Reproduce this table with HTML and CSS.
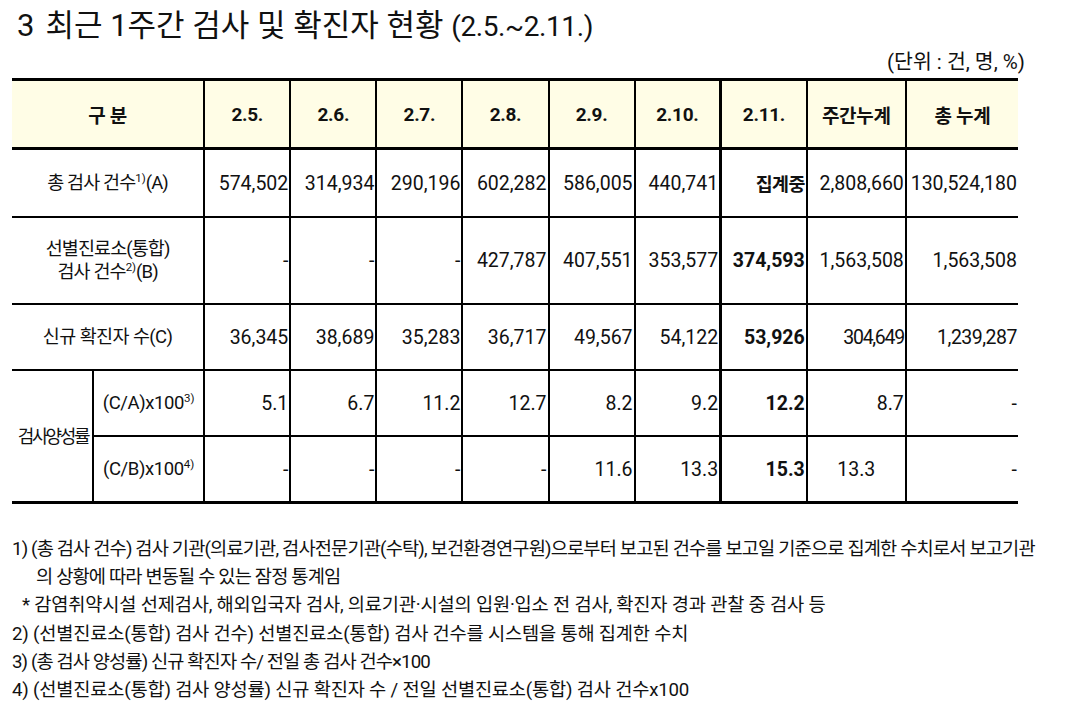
FILE: index.html
```html
<!DOCTYPE html>
<html lang="ko">
<head>
<meta charset="utf-8">
<title>최근 1주간 검사 및 확진자 현황</title>
<link rel="stylesheet" href="styles.css">
</head>
<body>
<div class="page">
  <h1 class="title"><span class="num">3</span><span class="ko">최근 1주간 검사 및 확진자 현황</span> <span class="range">(2.5.~2.11.)</span></h1>
  <div class="unit">(단위 : 건, 명, %)</div>
  <table class="stats">
    <colgroup>
      <col class="c1a"><col class="c1b">
      <col class="cd"><col class="cd"><col class="cd"><col class="cd"><col class="cd"><col class="cd"><col class="cd">
      <col class="cw"><col class="ct">
    </colgroup>
    <thead>
      <tr class="r-head">
        <th colspan="2">구 분</th>
        <th>2.5.</th><th>2.6.</th><th>2.7.</th><th>2.8.</th><th>2.9.</th><th>2.10.</th>
        <th class="today">2.11.</th>
        <th>주간누계</th><th>총 누계</th>
      </tr>
    </thead>
    <tbody>
      <tr class="r1">
        <td colspan="2" class="label">총 검사 건수<sup>1)</sup>(A)</td>
        <td class="n">574,502</td>
        <td class="n">314,934</td>
        <td class="n">290,196</td>
        <td class="n">602,282</td>
        <td class="n">586,005</td>
        <td class="n">440,741</td>
        <td class="n today b ko-n">집계중</td>
        <td class="n">2,808,660</td>
        <td class="n">130,524,180</td>
      </tr>
      <tr class="r2">
        <td colspan="2" class="label">선별진료소(통합)<br>검사 건수<sup>2)</sup>(B)</td>
        <td class="n">-</td><td class="n">-</td><td class="n">-</td>
        <td class="n">427,787</td>
        <td class="n">407,551</td>
        <td class="n">353,577</td>
        <td class="n today b">374,593</td>
        <td class="n">1,563,508</td>
        <td class="n">1,563,508</td>
      </tr>
      <tr class="r3">
        <td colspan="2" class="label">신규 확진자 수(C)</td>
        <td class="n">36,345</td>
        <td class="n">38,689</td>
        <td class="n">35,283</td>
        <td class="n">36,717</td>
        <td class="n">49,567</td>
        <td class="n">54,122</td>
        <td class="n today b">53,926</td>
        <td class="n tight">304,649</td>
        <td class="n snug">1,239,287</td>
      </tr>
      <tr class="r4">
        <td rowspan="2" class="label group">검사 양성률</td>
        <td class="label sub">(C/A)x100<sup>3)</sup></td>
        <td class="n">5.1</td><td class="n">6.7</td><td class="n">11.2</td><td class="n">12.7</td><td class="n">8.2</td><td class="n">9.2</td>
        <td class="n today b">12.2</td>
        <td class="n">8.7</td><td class="n">-</td>
      </tr>
      <tr class="r5">
        <td class="label sub">(C/B)x100<sup>4)</sup></td>
        <td class="n">-</td><td class="n">-</td><td class="n">-</td><td class="n">-</td><td class="n">11.6</td><td class="n">13.3</td>
        <td class="n today b">15.3</td>
        <td class="c">13.3</td><td class="n">-</td>
      </tr>
    </tbody>
  </table>
  <div class="notes">
    <p class="note hang">1) (총 검사 건수) 검사 기관(의료기관, 검사전문기관(수탁), 보건환경연구원)으로부터 보고된 건수를 보고일 기준으로 집계한 수치로서 보고기관<br>의 상황에 따라 변동될 수 있는 잠정 통계임</p>
    <p class="note star">* 감염취약시설 선제검사, 해외입국자 검사, 의료기관·시설의 입원·입소 전 검사, 확진자 경과 관찰 중 검사 등</p>
    <p class="note">2) (선별진료소(통합) 검사 건수) 선별진료소(통합) 검사 건수를 시스템을 통해 집계한 수치</p>
    <p class="note narrow">3) (총 검사 양성률) 신규 확진자 수/ 전일 총 검사 건수×100</p>
    <p class="note">4) (선별진료소(통합) 검사 양성률) 신규 확진자 수 / 전일 선별진료소(통합) 검사 건수x100</p>
  </div>
</div>
</body>
</html>
```

FILE: styles.css
```css
html, body {
  margin: 0;
  padding: 0;
  background: #ffffff;
}

body {
  font-family: Roboto, "Noto Sans CJK KR", "Noto Sans", sans-serif;
  color: #111111;
}

.page {
  width: 1080px;
  padding: 0 0 0 12px;
  box-sizing: border-box;
}

.title {
  margin: 0;
  padding: 8px 0 0 5px;
  height: 40px;
  font-size: 31px;
  line-height: 36px;
  font-weight: 400;
  letter-spacing: 0;
  white-space: nowrap;
  box-sizing: content-box;
}

.title .num {
  margin-right: 11px;
}

.title .range {
  font-size: 28px;
  letter-spacing: -0.4px;
}

.unit {
  text-align: right;
  padding-right: 55px;
  font-size: 20.5px;
  line-height: 26px;
  height: 30px;
  padding-top: 1px;
  box-sizing: border-box;
  letter-spacing: 0;
}

.stats {
  border-collapse: collapse;
  table-layout: fixed;
  width: 1006px;
  border-top: 3px solid #000;
  border-bottom: 3px solid #000;
  font-size: 18px;
}

.c1a { width: 81px; }
.c1b { width: 111px; }
.cd { width: 86px; }
.cw { width: 99px; }
.ct { width: 112px; }

.stats th,
.stats td {
  padding: 0;
  border-left: 2px solid #000;
  border-top: 2px solid #000;
  white-space: nowrap;
}

.stats th:first-child,
.stats td:first-child {
  border-left: none;
}

.r5 td.sub {
  border-left: 2px solid #000;
}

.stats tr > .today {
  border-left: 3px solid #000;
}

.r-head th {
  background: #fffde6;
  font-weight: 700;
  font-size: 19px;
  height: 66px;
  text-align: center;
  letter-spacing: -0.3px;
}

.r-head {
  border-bottom: 3px solid #000;
}

.r1 td { height: 66px; }
.r2 td { height: 85px; }
.r3 td { height: 64px; }
.r4 td { height: 64px; }
.r5 td { height: 64px; }

.label {
  text-align: center;
  font-size: 18.5px;
  line-height: 23px;
  letter-spacing: -0.9px;
}

.r3 .label {
  letter-spacing: -0.6px;
}

.label.group {
  font-size: 18px;
  letter-spacing: -2.3px;
  word-spacing: -3px;
  padding-left: 2px;
}

.label.sub {
  font-size: 18.5px;
  letter-spacing: -0.4px;
}

.n {
  text-align: right;
  padding-right: 1px !important;
  font-size: 19.5px;
  letter-spacing: 0;
}

.n.ko-n {
  font-size: 18.4px;
  letter-spacing: -0.6px;
}

.n.tight {
  letter-spacing: -1.3px;
}

.n.snug {
  letter-spacing: -0.5px;
}

.c {
  text-align: center;
  font-size: 19.5px;
}

.b {
  font-weight: 700;
}

sup {
  font-size: 11.5px;
  line-height: 0;
  vertical-align: 7px;
  letter-spacing: 0;
}

.notes {
  padding-top: 31px;
}

.note {
  margin: 0;
  font-size: 18.7px;
  line-height: 28.2px;
  white-space: nowrap;
  letter-spacing: -0.2px;
}

.note.hang {
  padding-left: 24px;
  text-indent: -24px;
  letter-spacing: -0.85px;
}

.note.narrow {
  letter-spacing: -0.9px;
}

.note.star {
  padding-left: 10px;
}
```
